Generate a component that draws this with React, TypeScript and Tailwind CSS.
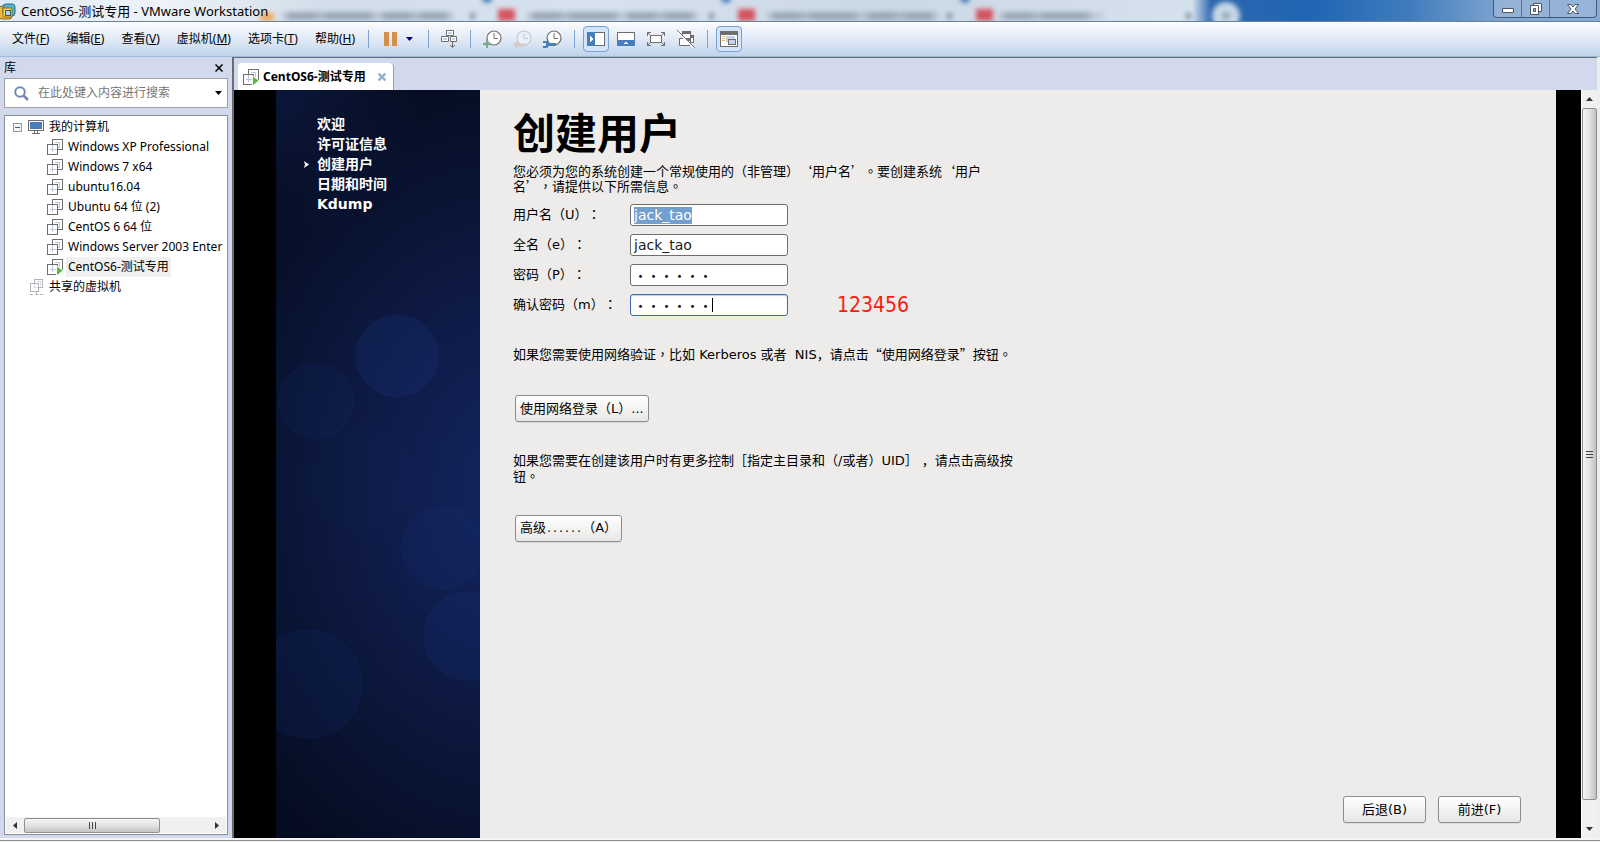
import React from 'react';

const UI_FONT = "font-['Noto_Sans','Noto_Sans_CJK_SC',sans-serif]";
const GUEST_FONT = "font-['DejaVu_Sans','Noto_Sans_CJK_SC',sans-serif]";

interface MenuEntry {
  label: string;
  hotkey: string;
}

const menus: MenuEntry[] = [
  { label: '文件', hotkey: 'F' },
  { label: '编辑', hotkey: 'E' },
  { label: '查看', hotkey: 'V' },
  { label: '虚拟机', hotkey: 'M' },
  { label: '选项卡', hotkey: 'T' },
  { label: '帮助', hotkey: 'H' },
];

const machines = [
  { name: 'Windows XP Professional', running: false },
  { name: 'Windows 7 x64', running: false },
  { name: 'ubuntu16.04', running: false },
  { name: 'Ubuntu 64 位 (2)', running: false },
  { name: 'CentOS 6 64 位', running: false },
  { name: 'Windows Server 2003 Enter', running: false },
  { name: 'CentOS6-测试专用', running: true },
];

const steps = ['欢迎', '许可证信息', '创建用户', '日期和时间', 'Kdump'];

/* ---------- icons ---------- */

const VmIcon = ({ running = false }: { running?: boolean }) => (
  <svg width="16" height="16" viewBox="0 0 16 16" fill="none" className="shrink-0" shapeRendering="crispEdges">
    <path d="M5.5 5V.5h10v10H11" stroke="#6e6e6e" />
    <path d="M.5 5.5h10v10H.5z" stroke="#6e6e6e" />
    <path d="M5.5 6v4.5H10M3 10.5h2M5.5 11v2M8 3.5h4.5V8H11" stroke="#b9c8e0" />
    {running && <path d="M9 7v9h2l5-4.5L11 7z" fill="#fff" />}
    {running && <path d="M10 7.5v8.5l5.5-4.2z" fill="#55bb3c" shapeRendering="auto" />}
  </svg>
);

const MonitorIcon = () => (
  <svg width="16" height="16" viewBox="0 0 16 16" className="shrink-0" shapeRendering="crispEdges">
    <path d="M.5 1.5h15v10H.5z" fill="#fff" stroke="#6e6e6e" />
    <path d="M2 3h12v7H2z" fill="#4a7ebb" />
    <path d="M6 12h1v2H6zM9 12h1v2H9zM4 14h8v1H4z" fill="#6e6e6e" />
  </svg>
);

const SharedIcon = () => (
  <svg width="14" height="16" viewBox="0 0 14 16" fill="none" className="shrink-0" shapeRendering="crispEdges">
    <path d="M4.5 4V.5h8v8H9M.5 4.5h8v8h-8z" stroke="#b4b4b4" />
    <path d="M4.5 5v3.5H8M7 2.5h3.5V7" stroke="#d5dbe6" />
    <path d="M6.5 13v2M0 15.5h3M5 15.5h4M10 15.5h3" stroke="#b4b4b4" />
  </svg>
);

const LogoIcon = () => (
  <svg width="16" height="18" viewBox="0 0 16 18" fill="none" className="shrink-0">
    <rect x="-1" y="4" width="13" height="13" rx="3" fill="#f4b63a" stroke="#8f6a1e" />
    <rect x="3" y="2" width="12" height="12" rx="3" fill="#4fb6d0" stroke="#1f6c86" />
    <rect x="3" y="6" width="9" height="9" rx="1" fill="#f9d35f" stroke="#8f6a1e" />
    <rect x="5.5" y="8.5" width="5" height="5" fill="#a9d6e8" stroke="#3d5a66" />
  </svg>
);

const Clock = ({ faded = false }: { faded?: boolean }) => (
  <g stroke={faded ? '#c4c9d2' : '#6e6e6e'}>
    <circle cx="11" cy="8" r="7" fill={faded ? '#eaf0f8' : '#fff'} strokeWidth="1.2" />
    <path d="M11 3v5.5h4" fill="none" />
  </g>
);

const SendKeysIcon = () => (
  <svg width="17" height="19" viewBox="0 0 17 19" fill="none">
    <path d="M5.5.5h7v5h-7zM.5 6.5h7v5h-7zM9.5 6.5h6v5h-6z" fill="#fff" stroke="#6e6e6e" />
    <path d="M7 2h4v2H7zM2 8h4v2H2zM11 8h3v2h-3z" fill="#c3d3ea" />
    <path d="M11.5 12v5M9 15l2.5 2.5L14 15" stroke="#6e6e6e" />
  </svg>
);

const SnapshotTakeIcon = () => (
  <svg width="19" height="19" viewBox="0 0 19 19" fill="none">
    <Clock />
    <path d="M0 14h8M4 10v8" stroke="#fff" strokeWidth="4" opacity=".6" />
    <path d="M0 14h8M4 10v8" stroke="#7ba78f" strokeWidth="2.4" />
  </svg>
);

const SnapshotRevertIcon = () => (
  <svg width="19" height="19" viewBox="0 0 19 19" fill="none">
    <Clock faded />
    <path d="M0 14.500l5-4v3h8v3H5v2.500z" fill="#d9cbc3" />
  </svg>
);

const SnapshotManageIcon = () => (
  <svg width="19" height="19" viewBox="0 0 19 19" fill="none">
    <Clock />
    <path d="M0 11h4l2 2h7v3H6l-2 2H0v-2h3v-3H0z" fill="#4a7ebb" />
  </svg>
);

const LibraryIcon = () => (
  <svg width="18" height="14" viewBox="0 0 18 14" shapeRendering="crispEdges">
    <path d="M.5.5h17v13H.5z" fill="#fff" stroke="#6e6e6e" />
    <path d="M0 0h8v14H0z" fill="#4a7ebb" />
    <path d="M3 4l3 3-3 3z" fill="#fff" />
  </svg>
);

const ThumbnailIcon = () => (
  <svg width="18" height="14" viewBox="0 0 18 14" shapeRendering="crispEdges">
    <path d="M.5.5h17v13H.5z" fill="#fff" stroke="#6e6e6e" />
    <path d="M0 8h18v6H0z" fill="#4a7ebb" />
    <path d="M6 12l3-2 3 2z" fill="#fff" />
  </svg>
);

const FullscreenIcon = () => (
  <svg width="18" height="14" viewBox="0 0 18 14" fill="none" stroke="#6e6e6e">
    <path d="M3.500 3.500h11v7h-11z" fill="#fff" />
    <path d="M.5 4V.5H4M14 .5h3.500V4M17.500 10v3.500H14M4 13.500H.5V10M.5.5l3 3M17.500.5l-3 3M17.500 13.500l-3-3M.5 13.500l3-3" />
  </svg>
);

const UnityIcon = () => (
  <svg width="18" height="18" viewBox="0 0 18 18" fill="none">
    <path d="M5.500 1.500h8v7h-8z" fill="#fff" stroke="#6e6e6e" />
    <path d="M5 1h9v3H5z" fill="#6e6e6e" />
    <path d="M13 5h4v8h-3z" fill="#fff" />
    <path d="M13 5h4v3h-4zM16 8h1v5h-1zM13 12h4v1h-4z" fill="#6e6e6e" />
    <path d="M2.500 8.500h11v7h-11z" fill="#fff" stroke="#6e6e6e" />
    <path d="M8 8h6v3H9z" fill="#6e6e6e" />
    <path d="M0 1l17 17" stroke="#fff" strokeWidth="2" />
    <path d="M0 0l18 18" stroke="#6e6e6e" />
  </svg>
);

const ConsoleIcon = () => (
  <svg width="18" height="16" viewBox="0 0 18 16" shapeRendering="crispEdges">
    <path d="M.5.5h17v15H.5z" fill="#fff" stroke="#6e6e6e" />
    <path d="M0 0h18v4H0z" fill="#6e6e6e" />
    <path d="M2 5h3v1H2zM2 7h3v1H2zM2 9h3v1H2z" fill="#e9b95c" />
    <path d="M6 5h9v6H6z" fill="#c3d3ea" />
    <path d="M8.500 8.500h7v5h-7z" fill="#c3d3ea" stroke="#6e6e6e" />
  </svg>
);

const CloseGlyph = ({ color, heavy = false }: { color: string; heavy?: boolean }) => (
  <svg width="8" height="8" viewBox="0 0 8 8" fill="none" stroke={color} strokeWidth={heavy ? 2.4 : 1.5}>
    <path d="M.5.5l7 7M7.500.5l-7 7" />
  </svg>
);

/* ---------- window chrome ---------- */

const GlassBackdrop = () => (
  <svg className="absolute inset-0 h-full w-full" viewBox="0 0 1600 21" preserveAspectRatio="none">
    <defs>
      <linearGradient id="aero" x1="0" x2="1">
        <stop offset="0" stopColor="#dfe8f2" />
        <stop offset=".1" stopColor="#eef3f8" />
        <stop offset=".2" stopColor="#d2deea" />
        <stop offset=".38" stopColor="#d6e2ee" />
        <stop offset=".55" stopColor="#cbd8e5" />
        <stop offset=".745" stopColor="#d5e1ed" />
        <stop offset=".757" stopColor="#2c66ae" />
        <stop offset=".82" stopColor="#1f66b4" />
        <stop offset=".88" stopColor="#3f7cbd" />
        <stop offset=".94" stopColor="#7fa5d0" />
        <stop offset="1" stopColor="#86abd6" />
      </linearGradient>
      <filter id="soft" x="-20%" y="-50%" width="140%" height="200%">
        <feGaussianBlur stdDeviation="2.4" />
      </filter>
      <filter id="softer" filterUnits="userSpaceOnUse" x="0" y="0" width="1600" height="30">
        <feGaussianBlur stdDeviation="4 2.600" />
      </filter>
    </defs>
    <rect width="1600" height="21" fill="url(#aero)" />
    <g filter="url(#softer)">
      <path d="M285 16h165M530 16h165M770 16h165M1002 16h98" stroke="#98a6b4" strokeWidth="8" strokeDasharray="34 3 52 6" />
    </g>
    <g filter="url(#soft)">
      <path d="M260 13h14v8h-14z" fill="#eba95a" />
      <path d="M498 9h17v12h-17zM738 9h17v12h-17zM976 9h17v12h-17z" fill="#d4525e" />
      <path d="M470 13h5v6h-5zM709 13h5v6h-5zM947 13h5v6h-5zM1186 13h5v6h-5z" fill="#7f8d9c" />
      <circle cx="487" cy="-2" r="5" fill="#3f78b8" />
      <circle cx="726" cy="-2" r="5" fill="#3f78b8" />
      <circle cx="965" cy="-2" r="5" fill="#3f78b8" />
      <circle cx="1226" cy="16" r="14" fill="#c7d8e8" />
      <circle cx="1226" cy="16" r="4" fill="#93a3b3" />
    </g>
  </svg>
);

const TitleBar = () => (
  <header className="relative flex h-[22px] items-center border-b border-[#6d7f96]">
    <GlassBackdrop />
    <div className="relative flex items-center gap-[5px]">
      <LogoIcon />
      <h1 className="text-[13px] leading-5 text-black">CentOS6-测试专用 - VMware Workstation</h1>
    </div>
    <div className="relative mr-[3px] ml-auto flex h-[18px] self-start overflow-hidden rounded-b-[4px] border border-t-0 border-[#43597a] bg-[#9db8d8]/70">
      <button aria-label="最小化" className="flex w-7 items-center justify-center border-r border-[#5b7396] pt-1">
        <svg width="12" height="5" viewBox="0 0 12 5"><path d="M.5.5h11v4H.5z" fill="#fff" stroke="#4d5566" /></svg>
      </button>
      <button aria-label="还原" className="flex w-7 items-center justify-center border-r border-[#5b7396]">
        <svg width="12" height="12" viewBox="0 0 12 12" stroke="#4d5566">
          <path d="M3.500.5h8v8h-8z" fill="#fff" />
          <path d="M.5 2.500h8v9h-8z" fill="#fff" />
          <path d="M3.500 5.500h2v3h-2z" fill="#9db8d8" />
        </svg>
      </button>
      <button aria-label="关闭" className="flex w-[46px] items-center justify-center">
        <svg width="12" height="10" viewBox="0 0 12 10">
          <path d="M.5.5h3.500l2 2.500 2-2.500h3.500L8 5l3.500 4.500H8L6 7 4 9.500H.5L4 5z" fill="#fff" stroke="#4d5566" />
        </svg>
      </button>
    </div>
  </header>
);

const Separator = () => <span className="h-[18px] w-px bg-[#7fa3d1]" />;

const toolButton = 'flex h-[26px] w-[26px] items-center justify-center';
const toolButtonOn = 'flex h-[26px] w-[26px] items-center justify-center rounded-sm border border-[#7aa0d0] bg-[#d3e5fa]';

const MenuBar = () => (
  <div className="flex h-[35px] items-center border-b border-[#9dbbe0] bg-linear-to-b from-[#fbfdff] via-[#e2eaf6] to-[#c0d4ec] pl-1">
    <nav className="flex gap-px text-[12px] leading-4 text-black">
      {menus.map((m) => (
        <button key={m.hotkey} className="px-2 whitespace-nowrap">
          {m.label}(<u>{m.hotkey}</u>)
        </button>
      ))}
    </nav>
    <div className="ml-[5px] flex items-center gap-3">
      <Separator />
      <div className="flex items-center gap-1">
        <button aria-label="挂起" className="flex h-[26px] w-[18px] items-center justify-center gap-[3px]">
          <span className="h-[14px] w-[5px] bg-[#d3914c]" />
          <span className="h-[14px] w-[5px] bg-[#d3914c]" />
        </button>
        <button aria-label="电源选项" className="flex h-[26px] w-[13px] items-center justify-center">
          <svg width="7" height="4" viewBox="0 0 7 4"><path d="M0 0h7L3.500 4z" fill="#00008b" /></svg>
        </button>
      </div>
      <Separator />
      <button aria-label="发送 Ctrl+Alt+Del"><SendKeysIcon /></button>
      <Separator />
      <div className="flex gap-[11px]">
        <button aria-label="拍摄快照"><SnapshotTakeIcon /></button>
        <button aria-label="恢复快照"><SnapshotRevertIcon /></button>
        <button aria-label="管理快照"><SnapshotManageIcon /></button>
      </div>
      <Separator />
    </div>
    <div className="ml-2 flex items-center gap-1">
      <button aria-label="显示库" className={toolButtonOn}><LibraryIcon /></button>
      <button aria-label="显示缩略图" className={toolButton}><ThumbnailIcon /></button>
      <button aria-label="全屏" className={toolButton}><FullscreenIcon /></button>
      <button aria-label="Unity" className={toolButton}><UnityIcon /></button>
    </div>
    <div className="ml-2 flex items-center gap-2">
      <Separator />
      <button aria-label="控制台视图" className={toolButtonOn}><ConsoleIcon /></button>
    </div>
  </div>
);

/* ---------- library ---------- */

const HorizontalScrollbar = () => (
  <div className="mx-px mb-px flex h-4 items-center bg-[#f0f0f0]">
    <button aria-label="向左滚动" className="flex w-[18px] justify-center">
      <svg width="4" height="7" viewBox="0 0 4 7"><path d="M4 0v7L0 3.500z" fill="#333" /></svg>
    </button>
    <div className="flex h-[15px] w-[136px] items-center justify-center gap-0.5 rounded-[2px] border border-[#8f8f8f] bg-linear-to-b from-[#f6f6f6] via-[#e2e2e4] to-[#c4c4c8]">
      <span className="h-[7px] w-px bg-[#444]" />
      <span className="h-[7px] w-px bg-[#444]" />
      <span className="h-[7px] w-px bg-[#444]" />
    </div>
    <button aria-label="向右滚动" className="ml-auto flex w-[18px] justify-center">
      <svg width="4" height="7" viewBox="0 0 4 7"><path d="M0 0v7l4-3.500z" fill="#333" /></svg>
    </button>
  </div>
);

const Library = () => (
  <aside className="flex w-[232px] shrink-0 flex-col px-1 pb-[3px] text-[12px] leading-5 text-black">
    <div className="flex h-[21px] items-center justify-between pr-[5px]">
      <h2>库</h2>
      <button aria-label="关闭库"><CloseGlyph color="#000" /></button>
    </div>
    <div className="flex h-[30px] shrink-0 items-center border border-[#a3a3a3] bg-white pr-[5px] pl-[9px]">
      <svg width="15" height="15" viewBox="0 0 15 15" fill="none" stroke="#7089b8" strokeWidth="2">
        <circle cx="6" cy="6" r="4.800" />
        <path d="M9.500 9.500l4.500 4.500" strokeWidth="2.500" />
      </svg>
      <input
        type="text"
        aria-label="搜索"
        placeholder="在此处键入内容进行搜索"
        className="ml-[9px] min-w-0 flex-1 bg-transparent outline-none placeholder:text-[#767676]"
      />
      <svg width="7" height="4" viewBox="0 0 7 4"><path d="M0 0h7L3.500 4z" fill="#000" /></svg>
    </div>
    <div className="mt-[7px] flex flex-1 flex-col overflow-hidden border border-[#8a8f9c] bg-white">
      <div className="flex-1 pt-px">
        <div className="flex h-5 items-center pl-2">
          <svg width="9" height="9" viewBox="0 0 9 9" shapeRendering="crispEdges">
            <path d="M.5.5h8v8h-8z" fill="#f4f4f4" stroke="#989898" />
            <path d="M2 4h5v1H2z" fill="#3a5a94" />
          </svg>
          <span className="mr-[5px] ml-[6px]"><MonitorIcon /></span>
          我的计算机
        </div>
        <ul>
          {machines.map((vm) => (
            <li key={vm.name} className="flex h-5 items-center gap-[3px] pl-[42px] whitespace-nowrap">
              <VmIcon running={vm.running} />
              <span className={vm.running ? 'bg-[#f0f0f0] px-0.5' : 'pl-0.5'}>{vm.name}</span>
            </li>
          ))}
        </ul>
        <div className="flex h-5 items-center gap-[5px] pl-[25px]">
          <SharedIcon />
          共享的虚拟机
        </div>
      </div>
      <HorizontalScrollbar />
    </div>
  </aside>
);

/* ---------- guest screen ---------- */

// Full-width punctuation that sits in the middle of its cell
const Mid = ({ children }: { children: React.ReactNode }) => (
  <span lang="zh-TW" className="font-['Noto_Sans_CJK_TC',sans-serif] leading-none">{children}</span>
);

const Cjk = ({ children }: { children: React.ReactNode }) => (
  <span className="font-['Noto_Sans_CJK_SC',sans-serif] leading-none">{children}</span>
);

const StepsPanel = () => (
  <div className="relative w-[204px] shrink-0 overflow-hidden bg-[#050c20]">
    <svg className="absolute inset-0 h-full w-full" viewBox="0 0 204 748" preserveAspectRatio="none">
      <defs>
        <radialGradient id="night" gradientUnits="userSpaceOnUse" cx="240" cy="400" r="420" gradientTransform="translate(240 400) scale(.8 1) translate(-240 -400)">
          <stop offset="0" stopColor="#14265f" />
          <stop offset=".4" stopColor="#0f1c4a" />
          <stop offset=".75" stopColor="#091433" />
          <stop offset="1" stopColor="#060d22" />
        </radialGradient>
        <radialGradient id="corner" gradientUnits="userSpaceOnUse" cx="0" cy="0" r="150">
          <stop offset="0" stopColor="#0f1c4a" stopOpacity=".6" />
          <stop offset="1" stopColor="#0f1c4a" stopOpacity="0" />
        </radialGradient>
      </defs>
      <rect width="204" height="748" fill="url(#night)" />
      <rect width="204" height="748" fill="url(#corner)" />
      <g fill="#1c3a8c" fillOpacity=".12" stroke="#2a4a9c" strokeOpacity=".08" strokeWidth="2">
        <circle cx="121" cy="266" r="41" fillOpacity=".2" />
        <circle cx="40" cy="311" r="37" fillOpacity=".1" />
        <circle cx="84" cy="387" r="53" fillOpacity=".03" strokeOpacity=".03" />
        <circle cx="167" cy="458" r="41" />
        <circle cx="192" cy="546" r="44" fillOpacity=".15" />
        <circle cx="32" cy="594" r="54" />
      </g>
    </svg>
    <ol className="relative pt-6 text-[14px] leading-5 font-bold text-white">
      {steps.map((step) => (
        <li key={step} className="flex items-center pl-7">
          <span className="w-[13px]">
            {step === '创建用户' && (
              <svg width="5" height="7" viewBox="0 0 5 7"><path d="M0 0l5 3.500L0 7l1-3.500z" fill="#fff" /></svg>
            )}
          </span>
          {step}
        </li>
      ))}
    </ol>
  </div>
);

const fieldClass = 'h-[22px] w-[158px] rounded-[3px] border border-[#6f6e6c] bg-white px-[3px] text-[14px] leading-5 text-[#1a1a1a] outline-none';
const dotsClass = "h-[22px] w-[158px] rounded-[3px] border border-[#6f6e6c] bg-white px-[3px] font-['Noto_Sans_CJK_JP',sans-serif] text-[13px] leading-5 text-black outline-none";
const buttonClass = 'h-[27px] rounded-[3px] border border-[#8f8d8b] bg-linear-to-b from-white to-[#e8e7e6] leading-4 whitespace-nowrap shadow-[0_1px_1px_rgba(0,0,0,0.08)]';

const CreateUserForm = () => (
  <form className="flex flex-1 flex-col pt-5 pr-[35px] pb-[15px] pl-[33px] text-[13px] leading-4 text-black [text-spacing-trim:space-all]">
    <h2 className="text-[42px] leading-[50px] font-bold">创建用户</h2>
    <p className="mt-1 leading-[14px]">
      您必须为您的系统创建一个常规使用的（非管理）<Cjk>‘</Cjk>用户名<Cjk>’</Cjk><Mid>。</Mid>要创建系统<Cjk>‘</Cjk>用户
      <br />
      名<Cjk>’</Cjk><Mid>，</Mid>请提供以下所需信息<Mid>。</Mid>
    </p>

    <div className="mt-[10px] flex flex-col gap-2">
      <div className="flex items-center">
        <label htmlFor="username" className="w-[117px]">用户名（U）<Mid>：</Mid></label>
        <input
          id="username"
          type="text"
          defaultValue="jack_tao"
          className="h-[22px] w-[158px] rounded-[3px] border border-[#6f6e6c] bg-white bg-[linear-gradient(#729fcf,#729fcf)] bg-[length:58px_17px] bg-[position:3px_2px] bg-no-repeat px-[3px] text-[14px] leading-5 text-white outline-none"
        />
      </div>
      <div className="flex items-center">
        <label htmlFor="fullname" className="w-[117px]">全名（e）<Mid>：</Mid></label>
        <input id="fullname" type="text" defaultValue="jack_tao" className={fieldClass} />
      </div>
      <div className="flex items-center">
        <label htmlFor="password" className="w-[117px]">密码（P）<Mid>：</Mid></label>
        <input id="password" type="text" defaultValue="······" className={dotsClass} />
      </div>
      <div className="flex items-center">
        <label htmlFor="confirm" className="w-[117px]">确认密码（m）<Mid>：</Mid></label>
        <div className="relative flex">
          <input
            id="confirm"
            type="text"
            defaultValue="······"
            className="h-[22px] w-[158px] rounded-[3px] border border-[#3f6ba8] bg-white px-[3px] font-['Noto_Sans_CJK_JP',sans-serif] text-[13px] leading-5 text-black shadow-[inset_0_1px_1px_#b9cfe8] outline-none"
          />
          <span className="absolute top-1 left-[82px] h-[14px] w-px bg-black" />
        </div>
        <span className="ml-[49px] font-['DejaVu_Sans_Condensed','DejaVu_Sans',sans-serif] text-[21px] leading-5 text-[#ff1a0d]">123456</span>
      </div>
    </div>

    <p className="mt-[31px]">
      如果您需要使用网络验证<Mid>，</Mid>比如 Kerberos 或者 &nbsp;NIS，请点击<Cjk>“</Cjk>使用网络登录<Cjk>”</Cjk>按钮<Mid>。</Mid>
    </p>
    <button type="button" className={`${buttonClass} mt-8 ml-0.5 self-start px-1`}>使用网络登录（L）...</button>

    <p className="mt-[31px]">
      如果您需要在创建该用户时有更多控制［指定主目录和（/或者）UID］ ，请点击高级按
      <br />
      钮<Mid>。</Mid>
    </p>
    <button type="button" className={`${buttonClass} mt-[30px] ml-0.5 self-start px-1`}>
      高级<span className="font-['DejaVu_Sans_Mono',monospace] text-[10px]">......</span>（A）
    </button>

    <div className="mt-auto flex justify-end gap-3">
      <button type="button" className={`${buttonClass} w-[83px]`}>后退(B)</button>
      <button type="submit" className={`${buttonClass} w-[83px]`}>前进(F)</button>
    </div>
  </form>
);

const VerticalScrollbar = () => (
  <div className="flex w-4 shrink-0 flex-col items-center border-l border-white bg-[#f0f0f0]">
    <button aria-label="向上滚动" className="flex h-[18px] items-center">
      <svg width="7" height="4" viewBox="0 0 7 4"><path d="M0 4h7L3.500 0z" fill="#333" /></svg>
    </button>
    <div className="flex w-[15px] flex-1 flex-col items-center justify-center gap-0.5 rounded-[2px] border border-[#8f8f8f] bg-linear-to-r from-[#f6f6f6] via-[#e2e2e4] to-[#c0c0c8]">
      <span className="h-px w-[7px] bg-[#444]" />
      <span className="h-px w-[7px] bg-[#444]" />
      <span className="h-px w-[7px] bg-[#444]" />
    </div>
    <button aria-label="向下滚动" className="mt-[20px] flex h-[18px] items-center">
      <svg width="7" height="4" viewBox="0 0 7 4"><path d="M0 0h7L3.500 4z" fill="#333" /></svg>
    </button>
  </div>
);

const Workspace = () => (
  <main className="flex min-w-0 flex-1 flex-col border-t border-l-2 border-[#6b6b6b]">
    <div className="flex h-8 shrink-0 items-end pl-1">
      <div className="flex h-[27px] items-center rounded-t-[4px] border-r border-[#8aa5c4] bg-white pr-[7px] pl-[5px] text-[12px] font-bold text-black">
        <VmIcon running />
        <span className="mx-1">CentOS6-测试专用</span>
        <button aria-label="关闭标签" className="ml-2"><CloseGlyph color="#94b1ce" heavy /></button>
      </div>
    </div>
    <div className="flex min-h-0 flex-1">
      <div className={`flex flex-1 bg-black ${GUEST_FONT}`}>
        <div className="w-[42px] shrink-0" />
        <StepsPanel />
        <div className="flex flex-1 bg-[#edeceb]">
          <CreateUserForm />
        </div>
        <div className="w-[25px] shrink-0" />
      </div>
      <VerticalScrollbar />
    </div>
  </main>
);

export default function App() {
  return (
    <div lang="zh-CN" className={`flex min-h-screen flex-col bg-[#d3d9ed] ${UI_FONT}`}>
      <TitleBar />
      <MenuBar />
      <div className="flex flex-1 border-r-[3px] border-[#eeeeee]">
        <Library />
        <Workspace />
      </div>
      <footer className="h-1 border-t-2 border-b border-t-[#f4f4f4] border-b-[#f4f4f4] bg-[#8c8c8c]" />
    </div>
  );
}
